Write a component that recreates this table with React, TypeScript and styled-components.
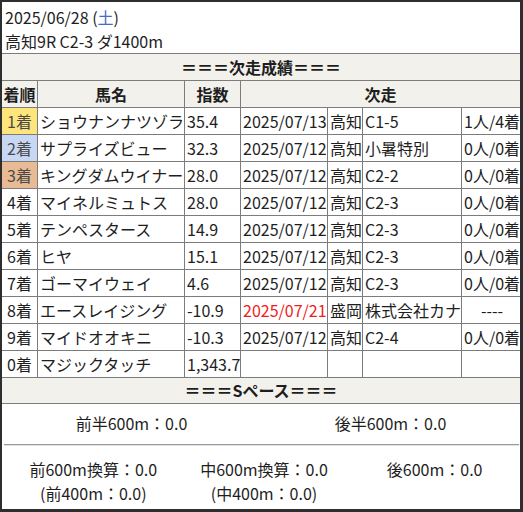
import React from "react";
import styled, { createGlobalStyle } from "styled-components";

const Global = createGlobalStyle`
  html, body { margin: 0; padding: 0; background: #fff; }
  body { font-family: "Noto Sans CJK JP", "Noto Sans", sans-serif; color: #1e1e1e; }
`;

const Frame = styled.div`
  box-sizing: border-box;
  width: 523px;
  height: 512px;
  border: 2px solid #2e2e2e;
  border-right-width: 3px;
  border-bottom-width: 3px;
  display: flex;
  flex-direction: column;
  background: #fff;
  font-size: 16px;
`;

const Title = styled.div`
  padding: 3px 0 0 3px;
  height: 51px;
  box-sizing: border-box;
  line-height: 24px;
`;

const Sat = styled.span`
  color: #4a6cc0;
`;

const Grid = styled.div`
  display: grid;
  grid-template-columns: 35px 146px 55px 86px 34px 98px 58px;
  grid-auto-rows: 26px;
  gap: 1px;
  background: #7c7c7c;
  border-top: 1px solid #7c7c7c;
  border-bottom: 1px solid #7c7c7c;
`;

const Section = styled.div<{ $span?: number }>`
  grid-column: span ${(p) => p.$span ?? 7};
  background: #f2f1ec;
  font-weight: 700;
  text-align: center;
  line-height: 26px;
  letter-spacing: 0;
`;

const Head = styled.div<{ $span?: number }>`
  grid-column: span ${(p) => p.$span ?? 1};
  background: #f2f1ec;
  font-weight: 700;
  text-align: center;
  line-height: 26px;
  white-space: nowrap;
  overflow: hidden;
`;

const rankBg: Record<number, string> = {
  1: "#fde57c",
  2: "#c8d8f4",
  3: "#e9bb95",
};

const Rank = styled.div<{ $rank: number }>`
  background: ${(p) => rankBg[p.$rank] ?? "#fff"};
  color: ${(p) => (rankBg[p.$rank] ? "#4a4a4a" : "#1e1e1e")};
  text-align: center;
  line-height: 26px;
  white-space: nowrap;
`;

const Cell = styled.div<{ $align?: string; $color?: string }>`
  background: #fff;
  text-align: ${(p) => p.$align ?? "left"};
  color: ${(p) => p.$color ?? "inherit"};
  padding: 0 0 0 2px;
  line-height: 26px;
  white-space: nowrap;
  overflow: hidden;
`;

const PaceHead = styled.div`
  height: 25px;
  line-height: 25px;
  background: #f2f1ec;
  font-weight: 700;
  text-align: center;
  border-bottom: 1px solid #7c7c7c;
`;

const HalfRow = styled.div`
  display: grid;
  grid-template-columns: 1fr 1fr;
  text-align: center;
  line-height: 24px;
  padding: 7px 0 9px;
`;

const Rule = styled.div`
  margin: 0 1px 0 2px;
  border-top: 1px solid #9a9a9a;
  border-bottom: 1px solid #e2e2e2;
`;

const ThirdRow = styled.div`
  display: grid;
  grid-template-columns: 1fr 1fr 1fr;
  text-align: center;
  line-height: 24px;
  padding: 11px 0 0 6px;
`;

type Row = {
  rank: number;
  name: string;
  idx: string;
  date: string;
  red?: boolean;
  venue: string;
  race: string;
  result: string;
};

const rows: Row[] = [
  { rank: 1, name: "ショウナンナツゾラ", idx: "35.4", date: "2025/07/13", venue: "高知", race: "C1-5", result: "1人/4着" },
  { rank: 2, name: "サプライズビュー", idx: "32.3", date: "2025/07/12", venue: "高知", race: "小暑特別", result: "0人/0着" },
  { rank: 3, name: "キングダムウイナー", idx: "28.0", date: "2025/07/12", venue: "高知", race: "C2-2", result: "0人/0着" },
  { rank: 4, name: "マイネルミュトス", idx: "28.0", date: "2025/07/12", venue: "高知", race: "C2-3", result: "0人/0着" },
  { rank: 5, name: "テンペスタース", idx: "14.9", date: "2025/07/12", venue: "高知", race: "C2-3", result: "0人/0着" },
  { rank: 6, name: "ヒヤ", idx: "15.1", date: "2025/07/12", venue: "高知", race: "C2-3", result: "0人/0着" },
  { rank: 7, name: "ゴーマイウェイ", idx: "4.6", date: "2025/07/12", venue: "高知", race: "C2-3", result: "0人/0着" },
  { rank: 8, name: "エースレイジング", idx: "-10.9", date: "2025/07/21", red: true, venue: "盛岡", race: "株式会社カナ", result: "----" },
  { rank: 9, name: "マイドオオキニ", idx: "-10.3", date: "2025/07/12", venue: "高知", race: "C2-4", result: "0人/0着" },
  { rank: 0, name: "マジックタッチ", idx: "1,343.7", date: "", venue: "", race: "", result: "" },
];

export default function App() {
  return (
    <>
      <Global />
      <Frame>
        <Title>
          <div>
            2025/06/28 (<Sat>土</Sat>)
          </div>
          <div>高知9R C2-3 ダ1400m</div>
        </Title>
        <Grid>
          <Section>＝＝＝次走成績＝＝＝</Section>
          <Head>着順</Head>
          <Head>馬名</Head>
          <Head>指数</Head>
          <Head $span={4}>次走</Head>
          {rows.map((r) => (
            <React.Fragment key={r.rank}>
              <Rank $rank={r.rank}>{r.rank}着</Rank>
              <Cell>{r.name}</Cell>
              <Cell>{r.idx}</Cell>
              <Cell $color={r.red ? "#ee1c1c" : undefined}>{r.date}</Cell>
              <Cell>{r.venue}</Cell>
              <Cell>{r.race}</Cell>
              <Cell $align="center">{r.result}</Cell>
            </React.Fragment>
          ))}
        </Grid>
        <PaceHead>＝＝＝Sペース＝＝＝</PaceHead>
        <HalfRow>
          <div>前半600m：0.0</div>
          <div>後半600m：0.0</div>
        </HalfRow>
        <Rule />
        <ThirdRow>
          <div>
            前600m換算：0.0
            <br />
            (前400m：0.0)
          </div>
          <div>
            中600m換算：0.0
            <br />
            (中400m：0.0)
          </div>
          <div>後600m：0.0</div>
        </ThirdRow>
      </Frame>
    </>
  );
}
